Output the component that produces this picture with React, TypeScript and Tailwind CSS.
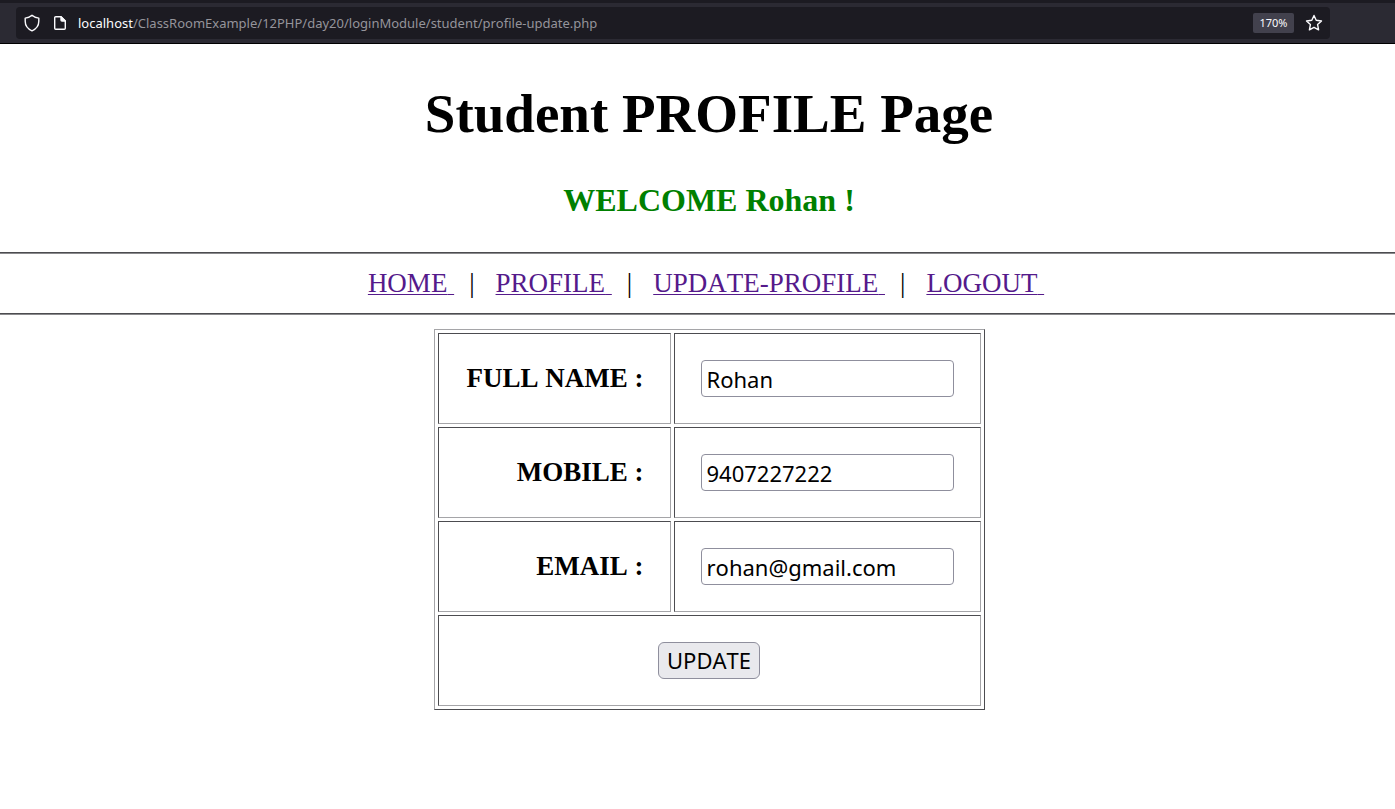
const fields = [
  { id: "fullName", label: "FULL NAME :", type: "text", value: "Rohan" },
  { id: "mobile", label: "MOBILE :", type: "tel", value: "9407227222" },
  { id: "email", label: "EMAIL :", type: "email", value: "rohan@gmail.com" },
];

const links = ["HOME", "PROFILE", "UPDATE-PROFILE", "LOGOUT"];

const cell =
  "h-[91px] border border-t-[#4c4c50] border-l-[#4c4c50] border-r-[#a5a5a8] border-b-[#a5a5a8] px-[26px] py-0";

function ShieldIcon() {
  return (
    <svg width="16" height="18" viewBox="0 0 16 18" fill="none" stroke="#fbfbfe" strokeWidth="1.4" strokeLinejoin="round" aria-hidden="true">
      <path d="M8 1.3C6.2 3 3.9 3.9 1.2 4.1v3.2c0 4.2 2.4 7.6 6.8 9.5 4.4-1.900 6.800-5.300 6.800-9.500V4.100C12.100 3.900 9.800 3 8 1.300Z" />
    </svg>
  );
}

function PageIcon() {
  return (
    <svg width="14" height="16" viewBox="0 0 14 16" fill="none" stroke="#fbfbfe" strokeWidth="1.4" strokeLinejoin="round" aria-hidden="true">
      <path d="M8 1.700H2.700a1 1 0 0 0-1 1v10.600a1 1 0 0 0 1 1h8.600a1 1 0 0 0 1-1V6Z" />
      <path d="M8 1.700V5a1 1 0 0 0 1 1h3.300Z" fill="#fbfbfe" />
    </svg>
  );
}

function StarIcon() {
  return (
    <svg width="18" height="18" viewBox="0 0 18 18" fill="none" stroke="#fbfbfe" strokeWidth="1.4" strokeLinejoin="round" aria-hidden="true">
      <path d="M9 1.500 11.200 6.300 16.500 7 12.600 10.600 13.600 15.800 9 13.300 4.400 15.800 5.400 10.600 1.500 7 6.800 6.300Z" />
    </svg>
  );
}

function BrowserBar() {
  return (
    <header className="border-t-[3px] border-b border-t-[#1c1b22] border-b-black bg-[#2b2a33] pt-1 pr-[65px] pb-1 pl-4">
      <div className="flex h-8 items-center rounded bg-[#1c1b22] pr-[7px] pl-2 font-['Noto_Sans',sans-serif]">
        <ShieldIcon />
        <span className="ml-[13px] flex">
          <PageIcon />
        </span>
        <p className="ml-[11px] flex-1 text-[13px] leading-5 text-[#95949b]">
          <span className="text-[#fbfbfe]">localhost</span>
          /ClassRoomExample/12PHP/day20/loginModule/student/profile-update.php
        </p>
        <button type="button" className="h-5 w-[41px] rounded-xs bg-[#42414d] text-center text-[11px] leading-5 text-[#fbfbfe]">
          170%
        </button>
        <button type="button" aria-label="Bookmark this page" className="ml-[11px]">
          <StarIcon />
        </button>
      </div>
    </header>
  );
}

function Rule() {
  return <hr className="h-0.5 border-t border-b border-t-[#4c4c50] border-b-[#8a8a8d]" />;
}

export default function App() {
  return (
    <div className="min-h-screen bg-white font-['Liberation_Serif',serif] text-[27px] text-black [font-kerning:none]">
      <BrowserBar />
      <main>
        <h1 className="pt-[38px] pl-[23px] text-center text-[55px] leading-[64px] font-bold">Student PROFILE Page</h1>
        <h2 className="mt-9 mb-[33px] pl-[23px] text-center text-[32px] leading-[37px] font-bold text-[#008000]">
          WELCOME Rohan !
        </h2>
        <Rule />
        <nav className="flex flex-wrap justify-center py-[14px] pl-[17px] leading-[31px]">
          {links.map((link, i) => (
            <span key={link} className="flex">
              {i > 0 && <span className="mr-[21px] ml-[15px]">|</span>}
              <a href="#" className="text-[#551a8b] underline decoration-1 underline-offset-2">
                {link}
                {"\u00a0"}
              </a>
            </span>
          ))}
        </nav>
        <Rule />
        <form className="mt-[14px] flex justify-center pl-[23px]" onSubmit={(e) => e.preventDefault()}>
          <table className="border-separate border-spacing-[3px] border border-t-[#a5a5a8] border-r-[#4c4c50] border-b-[#4c4c50] border-l-[#a5a5a8]">
            <tbody>
              {fields.map((f) => (
                <tr key={f.id}>
                  <th scope="row" className={`${cell} min-w-[233px] text-right font-bold`}>
                    <label htmlFor={f.id}>{f.label}</label>
                  </th>
                  <td className={cell}>
                    <input
                      id={f.id}
                      type={f.type}
                      defaultValue={f.value}
                      className="block h-[37px] w-[253px] rounded border border-[#8f8f9d] bg-white px-[5px] font-['Noto_Sans',sans-serif] text-[22px]"
                    />
                  </td>
                </tr>
              ))}
              <tr>
                <td colSpan={2} className={cell}>
                  <button
                    type="submit"
                    className="mx-auto block h-[37px] rounded-md border border-[#8f8f9d] bg-[#e9e9ed] px-2 font-['Noto_Sans',sans-serif] text-[22px] leading-[35px]"
                  >
                    UPDATE
                  </button>
                </td>
              </tr>
            </tbody>
          </table>
        </form>
      </main>
    </div>
  );
}
